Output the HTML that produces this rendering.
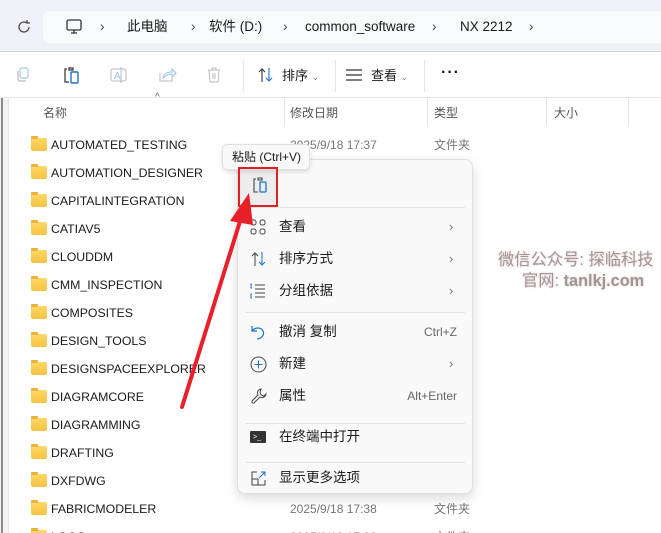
<!DOCTYPE html>
<html><head><meta charset="utf-8"><style>
*{margin:0;padding:0;box-sizing:border-box}
html,body{width:661px;height:533px;overflow:hidden}
body{background:#fff;font-family:"Liberation Sans","Noto Sans CJK SC",sans-serif;position:relative;color:#1a1a1a}
.abs{position:absolute}
.top{left:0;top:0;width:661px;height:52px;background:#eef2f8;border-bottom:1px solid #c9d3de}
.addr{left:43px;top:11px;width:618px;height:32px;background:#f8fafc;border-radius:6px 0 0 6px}
.addr span{position:absolute;top:8px;font-size:13.5px;line-height:16px;color:#1a1a1a;white-space:nowrap}
.tb{left:0;top:53px;width:661px;height:45px;background:#fff;border-bottom:1px solid #e5e5e5}
.left{left:0;top:98px;width:9px;height:435px;background:#f3f3f3;border-right:1px solid #e6e6e6}
.left:before{content:"";position:absolute;left:1px;top:0;width:2px;height:435px;background:#8a8a8a}
.hdr span{position:absolute;top:106px;font-size:12px;line-height:14px;color:#555}
.vl{position:absolute;top:99px;width:1px;height:27px;background:#e5e5e5}
.row{position:absolute;left:31px;height:20px;font-size:12.3px;line-height:16px}
.fold{position:absolute;left:0;top:3px;width:16px;height:13px;background:linear-gradient(#ffd766,#f5c342);border-radius:2px}
.fold:before{content:"";position:absolute;left:0;top:-2px;width:7px;height:3px;background:#e8b33a;border-radius:1px 1px 0 0}
.row b{font-weight:normal;position:absolute;left:20px;top:2px;white-space:nowrap}
.meta{position:absolute;font-size:12px;line-height:14px;color:#777;white-space:nowrap}
.menu{left:237px;top:159px;width:236px;height:335px;background:#f9f9f9;border:1px solid #e0e0e0;border-radius:8px;box-shadow:0 4px 12px rgba(0,0,0,.15)}
.mi{position:absolute;left:41px;font-size:13.5px;line-height:16px;color:#1a1a1a;white-space:nowrap}
.sc{position:absolute;right:15px;font-size:12px;line-height:16px;color:#666}
.ar{position:absolute;left:211px;font-size:13px;line-height:16px;color:#777}
.sep{position:absolute;left:8px;width:219px;height:1px;background:#e3e3e3}
.ic{position:absolute;left:12px}
</style></head><body>
<div class="abs top"></div>
<svg class="abs" style="left:16px;top:19px" width="16" height="16" viewBox="0 0 16 16"><path d="M13 8a5 5 0 1 1-2-4M11 1v3h3" fill="none" stroke="#444" stroke-width="1.2"/></svg>
<div class="abs addr">
<svg style="position:absolute;left:22px;top:7px" width="18" height="18" viewBox="0 0 18 18"><rect x="2" y="2" width="14" height="10" rx="1.5" fill="none" stroke="#333" stroke-width="1.3"/><path d="M6 15h6M9 12v3" stroke="#333" stroke-width="1.3"/></svg>
<span style="left:57px;color:#444">›</span><span style="left:84px">此电脑</span><span style="left:148px;color:#444">›</span><span style="left:166px">软件 (D:)</span><span style="left:240px;color:#444">›</span><span style="left:262px">common_software</span><span style="left:389px;color:#444">›</span><span style="left:417px">NX 2212</span><span style="left:486px;color:#444">›</span>
</div>
<div class="abs tb"></div>
<svg class="abs" style="left:14px;top:66px" width="18" height="18" viewBox="0 0 18 18"><rect x="6" y="2" width="8" height="10" rx="2" fill="none" stroke="#aac8e6" stroke-width="1.2"/><path d="M4 5v8a2 2 0 0 0 2 2h6" fill="none" stroke="#bbb" stroke-width="1.2"/></svg>
<svg class="abs" style="left:61px;top:65px" width="20" height="20" viewBox="0 0 20 20"><path d="M8 3h4v2H8zM6 4H4v13h4" fill="none" stroke="#333" stroke-width="1.2"/><rect x="10" y="7" width="7" height="11" rx="1" fill="none" stroke="#1a73c8" stroke-width="1.4"/></svg>
<svg class="abs" style="left:109px;top:66px" width="20" height="18" viewBox="0 0 20 18"><rect x="2" y="3" width="15" height="12" rx="2" fill="none" stroke="#bbb"/><text x="5" y="13" font-size="10" fill="#9cc2e8" font-family="Liberation Sans">A</text><path d="M12 1v16" stroke="#9cc2e8"/></svg>
<svg class="abs" style="left:157px;top:66px" width="20" height="18" viewBox="0 0 20 18"><path d="M3 7v8h12v-3" fill="none" stroke="#bbb"/><path d="M6 12c1-5 5-6 9-6V3l4 4-4 4V8c-3 0-6 1-9 4z" fill="none" stroke="#9cc2e8"/></svg>
<svg class="abs" style="left:205px;top:66px" width="18" height="18" viewBox="0 0 18 18"><path d="M3 4h12M7 4V2h4v2M4 4l1 12h8l1-12M8 7v6M10 7v6" fill="none" stroke="#bbb"/></svg>
<div class="abs" style="left:243px;top:60px;width:1px;height:32px;background:#e5e5e5"></div>
<svg class="abs" style="left:257px;top:67px" width="18" height="16" viewBox="0 0 18 16"><path d="M5 15V2M2 5l3-3 3 3" fill="none" stroke="#333" stroke-width="1.1"/><path d="M12 1v13M9 11l3 3 3-3" fill="none" stroke="#1a73c8" stroke-width="1.1"/></svg>
<div class="abs" style="left:282px;top:68px;font-size:13px;line-height:16px;white-space:nowrap">排序 <span style="font-size:9px;color:#777">⌄</span></div>
<svg class="abs" style="left:346px;top:69px" width="16" height="12"><path d="M0 1h16M0 6h16M0 11h16" stroke="#333" stroke-width="1.2"/></svg>
<div class="abs" style="left:371px;top:68px;font-size:13px;line-height:16px;white-space:nowrap">查看 <span style="font-size:9px;color:#777">⌄</span></div>
<div class="abs" style="left:335px;top:60px;width:1px;height:32px;background:#e5e5e5"></div>
<div class="abs" style="left:424px;top:60px;width:1px;height:32px;background:#e5e5e5"></div>
<div class="abs" style="left:441px;top:65px;font-size:16px;line-height:16px;font-weight:bold;letter-spacing:1px">···</div>
<div class="abs left"></div>
<div class="hdr"><span style="left:43px">名称</span><span style="left:290px">修改日期</span><span style="left:434px">类型</span><span style="left:554px">大小</span></div>
<div class="abs" style="left:155px;top:93px;font-size:10px;line-height:10px;color:#666">^</div>
<div class="vl" style="left:284px"></div><div class="vl" style="left:427px"></div><div class="vl" style="left:546px"></div><div class="vl" style="left:628px"></div>

<div class="row" style="top:135px"><i class="fold"></i><b>AUTOMATED_TESTING</b></div>
<div class="row" style="top:163px"><i class="fold"></i><b>AUTOMATION_DESIGNER</b></div>
<div class="row" style="top:191px"><i class="fold"></i><b>CAPITALINTEGRATION</b></div>
<div class="row" style="top:219px"><i class="fold"></i><b>CATIAV5</b></div>
<div class="row" style="top:247px"><i class="fold"></i><b>CLOUDDM</b></div>
<div class="row" style="top:275px"><i class="fold"></i><b>CMM_INSPECTION</b></div>
<div class="row" style="top:303px"><i class="fold"></i><b>COMPOSITES</b></div>
<div class="row" style="top:331px"><i class="fold"></i><b>DESIGN_TOOLS</b></div>
<div class="row" style="top:359px"><i class="fold"></i><b>DESIGNSPACEEXPLORER</b></div>
<div class="row" style="top:387px"><i class="fold"></i><b>DIAGRAMCORE</b></div>
<div class="row" style="top:415px"><i class="fold"></i><b>DIAGRAMMING</b></div>
<div class="row" style="top:443px"><i class="fold"></i><b>DRAFTING</b></div>
<div class="row" style="top:471px"><i class="fold"></i><b>DXFDWG</b></div>
<div class="row" style="top:499px"><i class="fold"></i><b>FABRICMODELER</b></div>
<div class="row" style="top:527px"><i class="fold"></i><b>LOGS</b></div>
<div class="meta" style="left:290px;top:138px">2025/9/18 17:37</div><div class="meta" style="left:434px;top:138px">文件夹</div>
<div class="meta" style="left:290px;top:502px">2025/9/18 17:38</div><div class="meta" style="left:434px;top:502px">文件夹</div>
<div class="meta" style="left:290px;top:530px">2025/9/18 17:38</div><div class="meta" style="left:434px;top:530px">文件夹</div>

<div class="abs" style="left:498px;top:251px;font-size:16.3px;line-height:18px;color:#999;white-space:nowrap;text-shadow:0 0 2px #f3c0c0">微信公众号: 探临科技</div>
<div class="abs" style="left:522px;top:272px;font-size:16.3px;line-height:18px;color:#999;white-space:nowrap;text-shadow:0 0 2px #f3c0c0">官网: <b>tanlkj.com</b></div>

<div class="abs menu">
<div style="position:absolute;left:2px;top:9px;width:38px;height:37px;background:#ededed;border-radius:4px"></div>
<svg class="ic" style="left:13px;top:16px" width="18" height="20" viewBox="0 0 18 20"><path d="M7 2h4v2H7zM5 3H3v13h4" fill="none" stroke="#444" stroke-width="1.1"/><rect x="9" y="6" width="6" height="10" rx="1" fill="none" stroke="#1a73c8" stroke-width="1.3"/></svg>
<div class="sep" style="top:47px"></div>
<svg class="ic" style="top:59px" width="16" height="16" viewBox="0 0 16 16"><g fill="none" stroke="#444"><rect x="1" y="1" width="5" height="5" rx="2"/><rect x="10" y="1" width="5" height="5" rx="2"/><rect x="1" y="10" width="5" height="5" rx="2"/><rect x="10" y="10" width="5" height="5" rx="2"/></g></svg>
<div class="mi" style="top:59px">查看</div><div class="ar" style="top:59px">›</div>
<svg class="ic" style="top:91px" width="18" height="16" viewBox="0 0 18 16"><path d="M5 15V2M2 5l3-3 3 3" fill="none" stroke="#444"/><path d="M12 1v13M9 11l3 3 3-3" fill="none" stroke="#1a73c8"/></svg>
<div class="mi" style="top:91px">排序方式</div><div class="ar" style="top:91px">›</div>
<svg class="ic" style="top:123px" width="16" height="16" viewBox="0 0 16 16"><path d="M2 1H1v4h1M2 11H1v4h1" fill="none" stroke="#1a73c8"/><path d="M5 2h10M5 6h10M5 10h10M5 14h10" stroke="#444"/></svg>
<div class="mi" style="top:123px">分组依据</div><div class="ar" style="top:123px">›</div>
<div class="sep" style="top:152px"></div>
<svg class="ic" style="top:164px" width="16" height="16" viewBox="0 0 16 16"><path d="M2 2v5h5M2 7c3-4 9-4 11 0s-2 8-6 8" fill="none" stroke="#1a73c8" stroke-width="1.2"/></svg>
<div class="mi" style="top:164px">撤消 复制</div><div class="sc" style="top:164px">Ctrl+Z</div>
<svg class="ic" style="top:196px" width="17" height="17" viewBox="0 0 17 17"><circle cx="8.5" cy="8.5" r="7.5" fill="none" stroke="#444"/><path d="M8.5 4.5v8M4.5 8.5h8" stroke="#1a73c8"/></svg>
<div class="mi" style="top:196px">新建</div><div class="ar" style="top:196px">›</div>
<svg class="ic" style="top:228px" width="17" height="17" viewBox="0 0 17 17"><path d="M11 1a4 4 0 0 0-3 6l-6 6a1.5 1.5 0 0 0 2 2l6-6a4 4 0 0 0 6-3l-2 2-3-1-1-3z" fill="none" stroke="#444"/></svg>
<div class="mi" style="top:228px">属性</div><div class="sc" style="top:228px">Alt+Enter</div>
<div class="sep" style="top:263px"></div>
<div class="ic" style="top:271px;width:16px;height:12px;background:#333;border-radius:1px"><div style="position:absolute;left:3px;top:3px;color:#fff;font-size:7px;line-height:7px">&gt;_</div></div>
<div class="mi" style="top:269px">在终端中打开</div>
<div class="sep" style="top:302px"></div>
<svg class="ic" style="top:310px" width="17" height="17" viewBox="0 0 17 17"><path d="M7 2H2v13h13v-5" fill="none" stroke="#444"/><path d="M9 8l6-6M11 2h4v4" fill="none" stroke="#1a73c8"/><path d="M2 9h6v6" fill="none" stroke="#444"/></svg>
<div class="mi" style="top:310px">显示更多选项</div>
</div>
<div class="abs" style="left:222px;top:144px;width:88px;height:26px;background:#f9f9f9;border:1px solid #e0e0e0;border-radius:5px;box-shadow:0 2px 5px rgba(0,0,0,.12);font-size:12px;line-height:14px;padding:5px 0 0 9px;white-space:nowrap">粘贴 (Ctrl+V)</div>
<div class="abs" style="left:238px;top:167px;width:40px;height:40px;border:2px solid #e02020"></div>
<svg class="abs" style="left:170px;top:185px" width="90" height="230"><path d="M12 222L72 30" stroke="#e8202a" stroke-width="4" stroke-linecap="round"/><path d="M79 8L60 36L83 40z" fill="#e8202a"/></svg>
</body></html>
